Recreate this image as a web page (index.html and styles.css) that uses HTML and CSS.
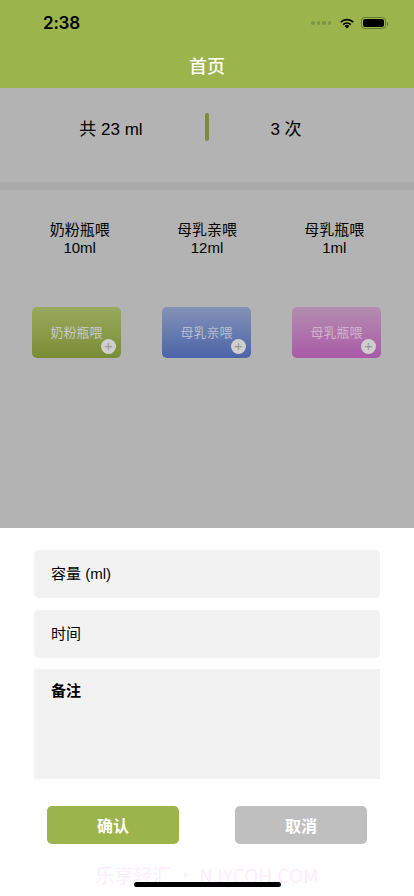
FILE: index.html
```html
<!DOCTYPE html>
<html>
<head>
	<meta charset="UTF-8">
	<title>首页</title>
	<link rel="stylesheet" href="styles.css">
</head>
<body>
	<div class="phone">
		<div class="top">
			<div class="statusbar">
				<span class="time">2:38</span>
				<div class="sys">
					<span class="dots"><i></i><i></i><i></i><i></i></span>
					<svg class="wifi" width="16" height="12" viewBox="0 0 16 12">
						<path d="M8 11.5 L5.6 9 A3.4 3.4 0 0 1 10.4 9 Z" fill="#000"/>
						<path d="M3.6 7 A6.2 6.2 0 0 1 12.4 7 L11.2 8.2 A4.5 4.5 0 0 0 4.8 8.2 Z" fill="#000"/>
						<path d="M1.2 4.6 A9.6 9.6 0 0 1 14.8 4.6 L13.6 5.8 A7.9 7.9 0 0 0 2.4 5.8 Z" fill="#000"/>
					</svg>
					<span class="battery"><b></b></span>
				</div>
			</div>
			<div class="navbar">首页</div>
		</div>

		<div class="content">
			<div class="summary">
				<div class="sum-item total">共 23 ml</div>
				<div class="sum-line"></div>
				<div class="sum-item count">3 次</div>
			</div>
			<div class="gap"></div>
			<div class="stats">
				<div class="stat"><p>奶粉瓶喂</p><p>10ml</p></div>
				<div class="stat"><p>母乳亲喂</p><p>12ml</p></div>
				<div class="stat"><p>母乳瓶喂</p><p>1ml</p></div>
			</div>
			<div class="cards">
				<div class="card green">奶粉瓶喂<span class="plus">+</span></div>
				<div class="card blue">母乳亲喂<span class="plus">+</span></div>
				<div class="card pink">母乳瓶喂<span class="plus">+</span></div>
			</div>
		</div>

		<div class="sheet">
			<div class="field">容量 (ml)</div>
			<div class="field">时间</div>
			<div class="field note">备注</div>
			<div class="btns">
				<div class="btn ok">确认</div>
				<div class="btn cancel">取消</div>
			</div>
			<div class="mark">乐享轻汇 • NJYCQH.COM</div>
			<div class="home"></div>
		</div>
	</div>
</body>
</html>
```

FILE: styles.css
```css
*{ margin: 0; padding: 0; box-sizing: border-box; }
body{ font-family: "Liberation Sans", "Noto Sans CJK SC", sans-serif; color: #000; }
.phone{ width: 414px; height: 896px; display: flex; flex-direction: column; background: #b3b3b3; overflow: hidden; }

/* 顶部绿色区域 */
.top{ background: #9bb44c; height: 88px; }
.statusbar{ height: 46px; display: flex; justify-content: space-between; align-items: center; padding: 0 28px 0 43px; }
.time{ font-family: "Inter", "Liberation Sans", sans-serif; font-weight: 600; font-size: 17px; letter-spacing: -0.2px; }
.sys{ display: flex; align-items: center; gap: 6px; }
.dots{ display: flex; gap: 2px; margin-right: 2px; }
.dots i{ width: 3.5px; height: 3.5px; border-radius: 50%; background: #6f8a3c; opacity: .7; }
.battery{ width: 25px; height: 12px; border: 1px solid #5f7a2c; border-radius: 3.5px; padding: 1px; position: relative; }
.battery b{ display: block; width: 100%; height: 100%; background: #000; border-radius: 2px; }
.battery:after{ content: ""; position: absolute; right: -3px; top: 3.5px; width: 1.5px; height: 4px; background: #5f7a2c; border-radius: 0 1px 1px 0; }
.navbar{ height: 42px; text-align: center; color: #fff; font-size: 18px; line-height: 38px; font-weight: 500; font-family: "Noto Sans CJK SC", sans-serif; }

/* 遮罩后的内容 */
.content{ flex: 1; }
.summary{ height: 94px; display: flex; align-items: center; padding: 0 0 16px 17px; }
.sum-item{ text-align: center; font-size: 17px; }
.total{ width: 188px; }
.count{ width: 154px; }
.sum-line{ width: 4px; height: 28px; background: #7b8d3a; border-radius: 2px; }
.gap{ height: 8px; background: #aaaaaa; }
.stats{ display: flex; padding: 31px 16px 0; }
.stat{ flex: 1; text-align: center; font-size: 15px; line-height: 18px; }
.cards{ display: flex; justify-content: space-between; padding: 50px 33px 0 32px; }
.card{ width: 89px; height: 51px; border-radius: 5px; position: relative; display: flex; align-items: center; justify-content: center; font-size: 13px; color: #c9c9c9; padding-bottom: 2px; font-family: "Noto Sans CJK SC", sans-serif; }
.green{ background: linear-gradient(#9aa95e, #7a8c36); }
.blue{ background: linear-gradient(#8392b6, #4b64a9); color: #b7bdd0; }
.pink{ background: linear-gradient(#b48db0, #a95aa7); color: #d1b2cd; }
.plus{ position: absolute; right: 5px; bottom: 4px; width: 15px; height: 15px; border-radius: 50%; background: #cfcfcf; color: #9a9a9a; font-size: 15px; line-height: 14px; text-align: center; font-family: "Liberation Sans", sans-serif; }

/* 底部弹层 */
.sheet{ background: #fff; height: 368px; padding: 22px 34px 0; display: flex; flex-direction: column; gap: 12px; position: relative; }
.field{ height: 48px; background: #f2f2f2; border-radius: 5px; font-size: 15px; line-height: 48px; padding-left: 17px; }
.note{ height: 110px; border-radius: 0; line-height: 20px; padding-top: 12px; font-weight: 700; margin-top: -1px; }
.btns{ display: flex; justify-content: space-between; padding: 15px 13px 0; }
.btn{ width: 132px; height: 38px; border-radius: 5px; color: #fff; font-size: 16px; font-weight: 700; text-align: center; line-height: 38px; font-family: "Noto Sans CJK SC", sans-serif; }
.ok{ background: #9bb44c; }
.cancel{ background: #bfbfbf; }
.mark{ position: absolute; left: 0; right: 0; top: 333px; text-align: center; color: #fdeefb; font-size: 19px; font-family: "Noto Sans CJK SC", sans-serif; }
.home{ position: absolute; left: 134px; top: 354px; width: 147px; height: 5px; border-radius: 3px; background: #000; }
```
